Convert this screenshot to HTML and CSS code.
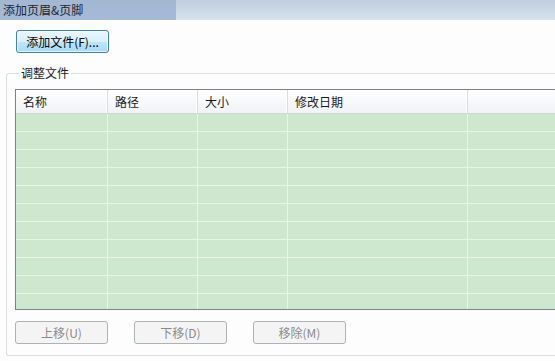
FILE: index.html
```html
<!DOCTYPE html>
<html lang="zh-CN">
<head>
  <meta charset="UTF-8">
  <title>添加页眉&amp;页脚</title>
  <link rel="stylesheet" href="styles.css">
</head>
<body>

  <div class="titlebar">
    <div class="title-left">添加页眉&amp;页脚</div>
    <div class="title-right"></div>
  </div>

  <div class="dialog">
    <button class="btn btn-active">添加文件(F)...</button>

    <fieldset class="group">
      <legend>调整文件</legend>

      <div class="file-list">
        <div class="list-head">
          <div class="col c1">名称</div>
          <div class="col c2">路径</div>
          <div class="col c3">大小</div>
          <div class="col c4">修改日期</div>
          <div class="col c5"></div>
        </div>
        <div class="list-body" id="listBody"></div>
      </div>

      <div class="actions">
        <button class="btn" disabled>上移(U)</button>
        <button class="btn" disabled>下移(D)</button>
        <button class="btn" disabled>移除(M)</button>
      </div>
    </fieldset>
  </div>

  <script>
    // empty striped rows for the list
    const body = document.getElementById('listBody');
    for (let i = 0; i < 11; i++) {
      const row = document.createElement('div');
      row.className = 'list-row';
      for (let c = 1; c <= 5; c++) {
        const cell = document.createElement('div');
        cell.className = 'cell c' + c;
        row.appendChild(cell);
      }
      body.appendChild(row);
    }
  </script>

</body>
</html>
```

FILE: styles.css
```css
:root {
  --text: #1a1a1a;
  --row-green: #cde8cf;
  --row-line: #eaf5e4;
  --group-border: #d9dfe3;
  --list-border: #7c8287;
}

* { margin: 0; padding: 0; box-sizing: border-box; }

html, body {
  width: 555px;
  height: 361px;
  overflow: hidden;
}

body {
  font-family: "Noto Sans CJK SC", "Liberation Sans", sans-serif;
  font-size: 12px;
  color: var(--text);
  background: #fdfdfd;
}

.titlebar {
  display: flex;
  height: 20px;
}

.title-left {
  width: 176px;
  padding-left: 3px;
  line-height: 20px;
  color: #1c2430;
  background: linear-gradient(to bottom, #a4b7d2, #a5bad6);
}

.title-right {
  flex: 1;
  background: linear-gradient(to bottom, #c0cedd, #d5e3ef);
}

.dialog {
  padding: 10px 0 0 6px;
}

.btn {
  width: 93px;
  height: 23px;
  font-family: inherit;
  font-size: 12px;
  color: #000;
  border: 1px solid #adb2b5;
  border-radius: 3px;
  background: linear-gradient(to bottom, #f6f6f6 0%, #ededed 50%, #e6e6e6 100%);
}

.btn:disabled {
  color: #8a8a8a;
  background: #f4f4f4;
}

.btn-active {
  margin-left: 10px;
  border-color: #3c7fb1;
  background: linear-gradient(to bottom, #eaf6fd 0%, #d9f0fc 50%, #bee6fd 52%, #a7d9f5 100%);
  box-shadow: inset 0 0 0 1px rgba(255, 255, 255, 0.7);
}

.group {
  margin-top: 12px;
  padding: 8px 0 11px 8px;
  border: 1px solid var(--group-border);
  border-right: none;
  border-radius: 3px 0 0 3px;
}

.group legend {
  margin-left: 4px;
  padding: 0 2px;
  line-height: 16px;
}

.file-list {
  border: 1px solid var(--list-border);
  border-right: none;
  background: var(--row-green);
}

.list-head,
.list-row {
  display: flex;
}

.list-head {
  height: 24px;
  background: linear-gradient(to bottom, #ffffff, #f1f2f6);
  border-bottom: 1px solid #d5d5d5;
}

.c1 { width: 92px; flex: none; }
.c2 { width: 90px; flex: none; }
.c3 { width: 90px; flex: none; }
.c4 { width: 180px; flex: none; }
.c5 { flex: 1; }

.col {
  padding: 3px 0 0 7px;
  border-right: 1px solid #dcdcdc;
  box-shadow: inset -1px 0 0 #ffffff;
}

.col.c5,
.cell.c5 {
  border-right: none;
  box-shadow: none;
}

.list-body {
  height: 195px;
  overflow: hidden;
}

.list-row {
  height: 18px;
  border-bottom: 1px solid var(--row-line);
}

.cell {
  border-right: 1px solid var(--row-line);
}

.actions {
  display: flex;
  gap: 26px;
  margin-top: 11px;
}
```
